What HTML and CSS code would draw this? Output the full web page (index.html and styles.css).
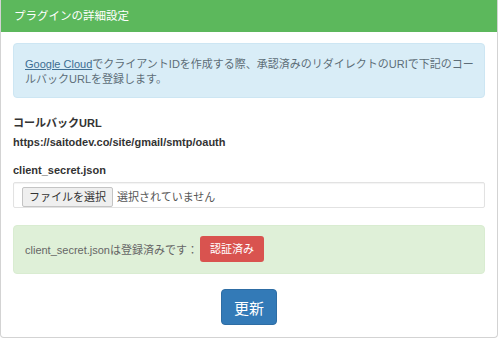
FILE: index.html
```html
<!DOCTYPE html>
<html lang="ja">
<head>
<meta charset="utf-8">
<link rel="stylesheet" href="styles.css">
</head>
<body>
<div class="panel">
  <div class="panel-heading">プラグインの詳細設定</div>
  <div class="panel-body">
    <div class="alert alert-info"><a class="link" href="#">Google Cloud</a>でクライアントIDを作成する際、承認済みのリダイレクトのURIで下記のコールバックURLを登録します。</div>
    <div class="label">コールバックURL</div>
    <div class="url">https://saitodev.co/site/gmail/smtp/oauth</div>
    <div class="label label-file">client_secret.json</div>
    <div class="file-input">
      <span class="file-btn">ファイルを選択</span>
      <span class="file-status">選択されていません</span>
    </div>
    <div class="alert alert-success">
      <span class="success-text">client_secret.jsonは登録済みです：</span>
      <span class="btn-danger">認証済み</span>
    </div>
    <div class="actions">
      <button class="btn-primary">更新</button>
    </div>
  </div>
</div>
</body>
</html>
```

FILE: styles.css
```css
html, body {
  margin: 0;
  padding: 0;
  background: #ffffff;
}
body {
  font-family: "Liberation Sans", "Noto Sans CJK JP", sans-serif;
  font-size: 11px;
  color: #333333;
}
.panel {
  width: 498px;
  box-sizing: border-box;
  border: 1px solid #d3d3d3;
  border-top: none;
  border-radius: 0 0 4px 4px;
}
.panel-heading {
  height: 32px;
  line-height: 32px;
  background: #5cb85c;
  color: #ffffff;
  padding: 0 13px;
  font-size: 11.5px;
}
.panel-body {
  padding: 11px 12px 12px;
}
.alert {
  border-radius: 4px;
  box-sizing: border-box;
}
.alert-info {
  background: #d9edf7;
  border: 1px solid #cde6f3;
  color: #5d6d77;
  padding: 13px 4px 11px 11px;
  line-height: 14.5px;
  margin-bottom: 18px;
}
.link {
  color: #3d6e92;
  text-decoration: underline;
}
.label {
  font-weight: bold;
  line-height: 15px;
  color: #333333;
}
.url {
  font-weight: bold;
  line-height: 15px;
  margin-top: 4px;
  color: #333333;
}
.label-file {
  margin-top: 13px;
}
.file-input {
  margin-top: 4px;
  height: 26px;
  box-sizing: border-box;
  border: 1px solid #e2e2e2;
  border-radius: 2px;
  box-shadow: inset 0 1px 1px rgba(0,0,0,0.05);
  padding: 4px 8px 0;
  display: flex;
  align-items: flex-start;
  gap: 4px;
}
.file-btn {
  height: 20px;
  line-height: 18px;
  box-sizing: border-box;
  padding: 0 6px;
  background: #efefef;
  border: 1px solid #c4c4c4;
  border-radius: 2px;
  color: #333333;
}
.file-status {
  line-height: 20px;
  color: #555555;
}
.alert-success {
  margin-top: 17px;
  background: #dff0d8;
  border: 1px solid #d9ecd1;
  padding: 10px 11px 11px;
  display: flex;
  align-items: center;
  gap: 2px;
}
.success-text {
  color: #666666;
}
.btn-danger {
  height: 26px;
  line-height: 26px;
  padding: 0 10px;
  background: #d9534f;
  color: #ffffff;
  border-radius: 3px;
  font-size: 11px;
}
.actions {
  margin-top: 15px;
  display: flex;
  justify-content: center;
}
.btn-primary {
  height: 36px;
  padding: 0 12px;
  background: #337ab7;
  color: #ffffff;
  border: 1px solid #2e6da4;
  border-radius: 4px;
  font-family: "Liberation Sans", "Noto Sans CJK JP", sans-serif;
  font-size: 15px;
}
```
